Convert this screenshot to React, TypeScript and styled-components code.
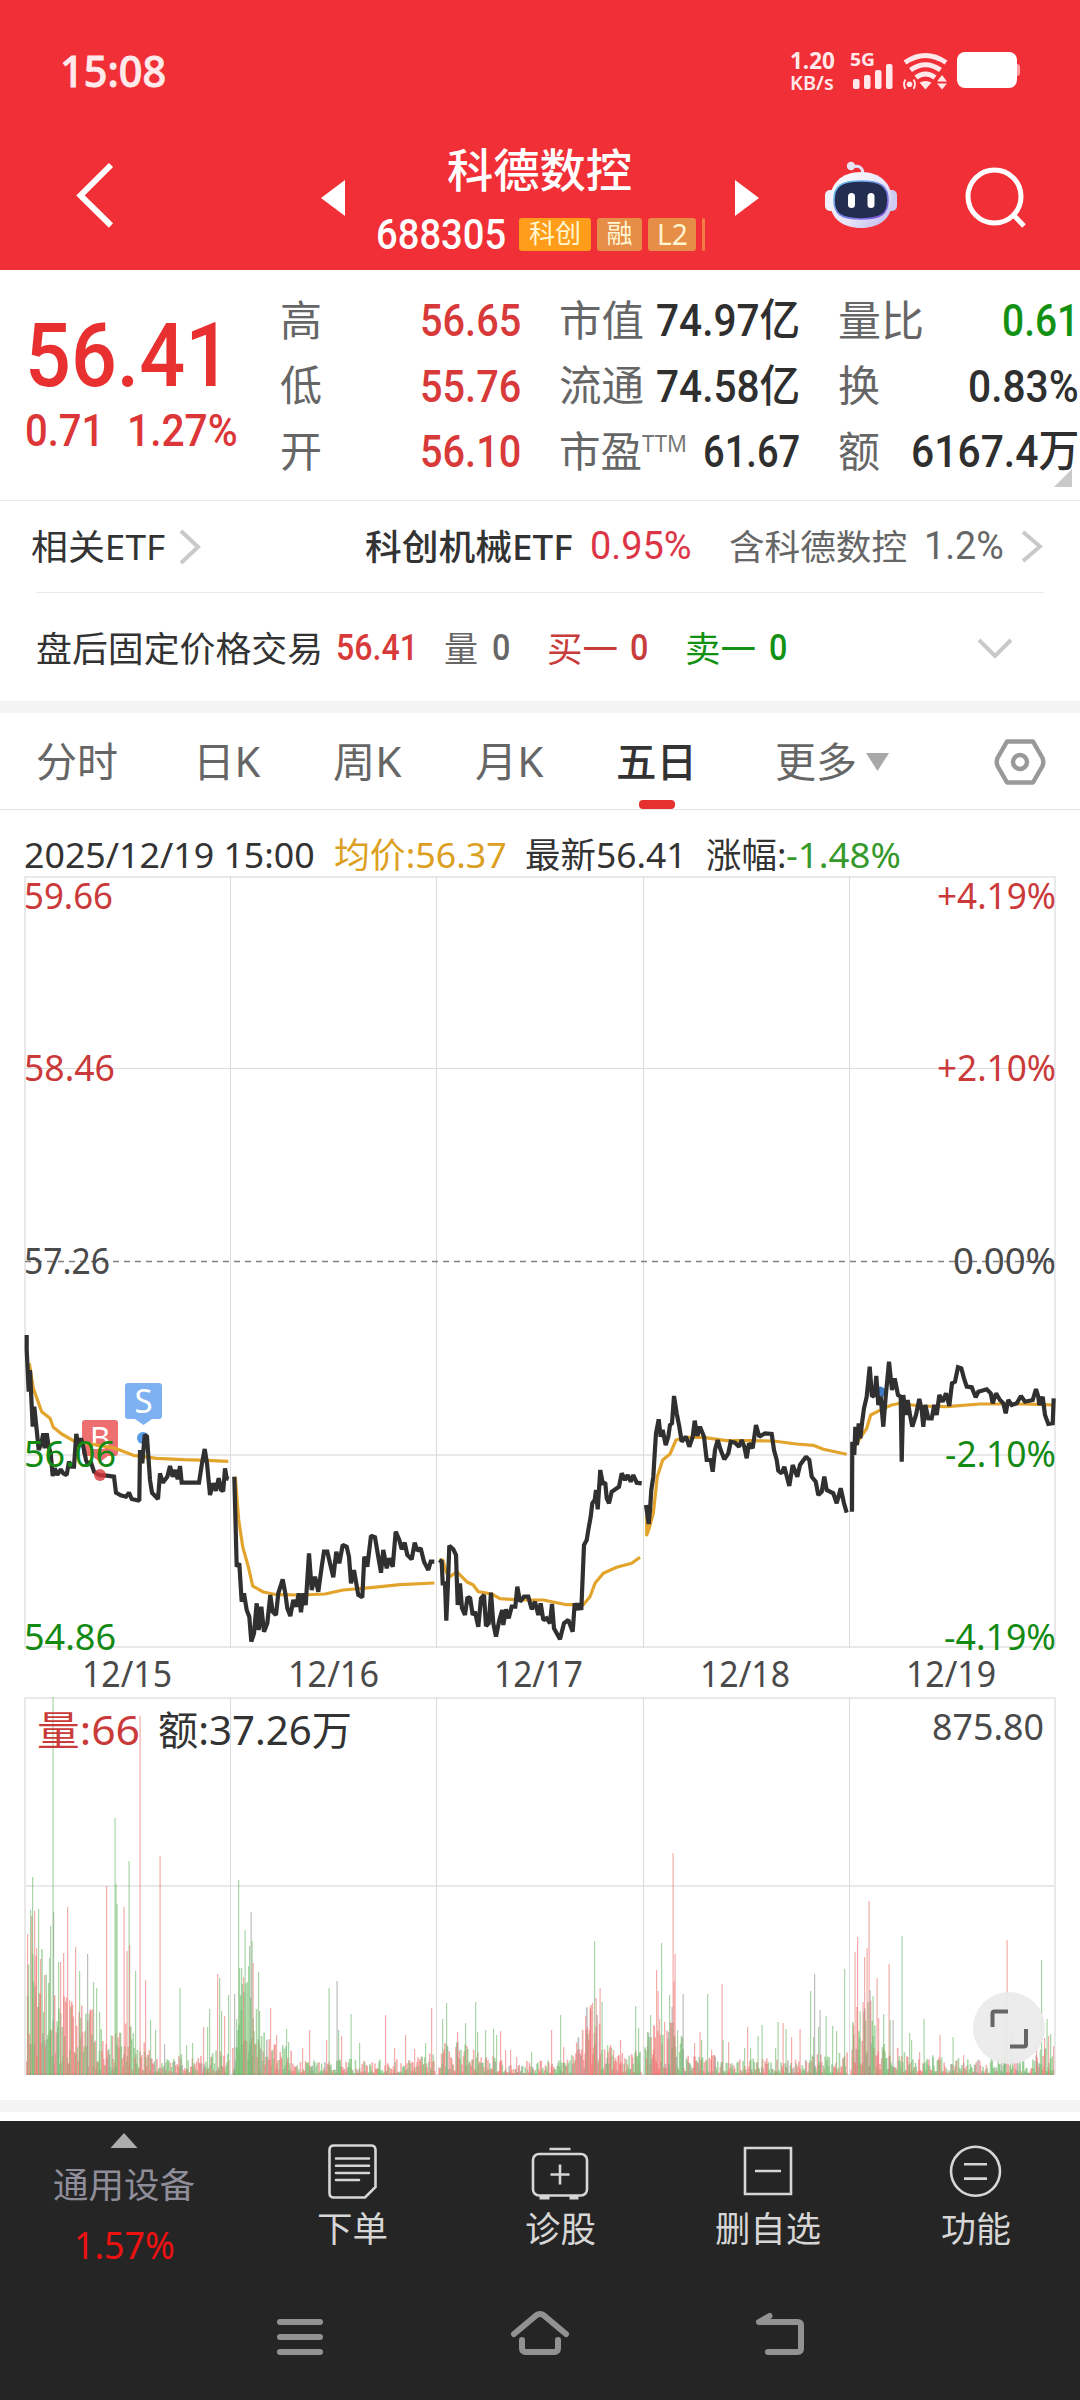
import React, { useLayoutEffect, useRef, useState } from "react";
import styled, { createGlobalStyle } from "styled-components";

const SANS = '"Noto Sans", "Noto Sans CJK SC", sans-serif';
const DIN = 'Roboto, "Noto Sans CJK SC", sans-serif';

const Global = createGlobalStyle`
  * { box-sizing: border-box; }
  body { margin: 0; background: #fff; font-family: ${SANS}; }
`;

/* ---------- text set to a fixed measure ---------- */

interface LabelProps {
  $w: number;
  $size: number;
  $ml?: number;
  $dy?: number;
  $color?: string;
  $weight?: number;
  $din?: boolean;
  $stroke?: number;
  $lh?: number;
}

const LabelBox = styled.span<LabelProps>`
  display: block;
  flex: none;
  width: ${(p) => p.$w}px;
  margin-left: ${(p) => p.$ml ?? 0}px;
  margin-top: ${(p) => p.$dy ?? 0}px;
  font-family: ${(p) => (p.$din ? DIN : SANS)};
  font-size: ${(p) => p.$size}px;
  font-weight: ${(p) => p.$weight ?? 400};
  color: ${(p) => p.$color ?? "inherit"};
  -webkit-text-stroke: ${(p) => p.$stroke ?? 0}px currentColor;
  line-height: ${(p) => p.$lh ?? 1.2};
  white-space: nowrap;
`;

const LabelInk = styled.span`
  display: inline-block;
  transform-origin: 0 50%;
`;

function Label({ children, ...box }: LabelProps & { children: React.ReactNode }) {
  const ref = useRef<HTMLSpanElement>(null);
  const [scale, setScale] = useState(1);
  useLayoutEffect(() => {
    if (ref.current) setScale(box.$w / ref.current.offsetWidth);
  }, [box.$w, children]);
  return (
    <LabelBox {...box}>
      <LabelInk ref={ref} style={{ transform: `scaleX(${scale})` }}>
        {children}
      </LabelInk>
    </LabelBox>
  );
}

const Icon = styled.svg<{ $ml?: number; $mt?: number }>`
  display: block;
  flex: none;
  margin-left: ${(p) => p.$ml ?? 0}px;
  margin-top: ${(p) => p.$mt ?? 0}px;
`;

/* ---------- layout ---------- */

const Screen = styled.main`
  width: 1080px;
  height: 2400px;
  display: flex;
  flex-direction: column;
  background: #fff;
  overflow: hidden;
`;

const Header = styled.header`
  height: 270px;
  flex: none;
  background: #f12f36;
  color: #fff;
`;

const StatusBar = styled.div`
  height: 142px;
  display: flex;
  align-items: center;
  padding-left: 60px;
  color: #ffe9ea;
`;

const NetSpeed = styled.div`
  width: 46px;
  margin: 0 12px 0 624px;
  display: flex;
  flex-direction: column;
  gap: 2px;
`;

const TitleBar = styled.div`
  height: 128px;
  display: flex;
  align-items: flex-start;
  padding-left: 75px;
`;

const TitleBlock = styled.div`
  width: 331px;
  margin-left: 30px;
  display: flex;
  flex-direction: column;
`;

const CodeRow = styled.div`
  display: flex;
  align-items: center;
  height: 34px;
  margin-top: 20px;
`;

const Tag = styled.span<{ $w: number; $ml: number; $bg: string }>`
  width: ${(p) => p.$w}px;
  height: 33px;
  margin-left: ${(p) => p.$ml}px;
  flex: none;
  display: flex;
  align-items: center;
  justify-content: center;
  border-radius: 3px;
  background: ${(p) => p.$bg};
  color: #fff6d0;
`;

const Quote = styled.section`
  height: 231px;
  flex: none;
  display: flex;
  position: relative;
  border-bottom: 1px solid #e9e9e9;
`;

const PriceBlock = styled.div`
  width: 281px;
  padding: 33px 0 0 25px;
`;

const ChangeRow = styled.div`
  display: flex;
  margin-top: -5px;
`;

const Stats = styled.div`
  display: grid;
  grid-template-columns: 241px 241px 241px;
  grid-auto-rows: 65.5px;
  column-gap: 38px;
  margin-left: -1px;
  padding-top: 17px;
`;

const Stat = styled.div`
  display: flex;
  align-items: center;
  justify-content: space-between;
  color: #666;
`;

const StatName = styled.span`
  display: flex;
`;

const Corner = styled.span`
  position: absolute;
  left: 1054px;
  top: 199px;
  border-left: 18px solid transparent;
  border-bottom: 18px solid #c9c9c9;
`;

const EtfRow = styled.section`
  height: 91px;
  flex: none;
  display: flex;
  align-items: center;
  margin-right: 36px;
  padding-left: 31px;
  color: #333;
`;

const Divider = styled.div`
  height: 1px;
  flex: none;
  margin: 0 36px;
  background: #e9e9e9;
`;

const AfterRow = styled.section`
  height: 108px;
  flex: none;
  display: flex;
  align-items: center;
  padding: 4px 0 0 36px;
  color: #333;
`;

const Band = styled.div`
  height: 12px;
  flex: none;
  background: #f4f4f4;
`;

const Tabs = styled.nav`
  height: 97px;
  flex: none;
  display: flex;
  align-items: center;
  padding: 1px 0 0 36px;
  color: #666;
  border-bottom: 1px solid #e4e4e4;
`;

const ActiveTab = styled.div`
  position: relative;
  height: 95px;
  display: flex;
  align-items: center;
  color: #333;
  margin-left: 73px;

  &::after {
    content: "";
    position: absolute;
    left: 23px;
    bottom: 0;
    width: 36px;
    height: 9px;
    border-radius: 4px;
    background: #e63030;
  }
`;

const InfoRow = styled.div`
  height: 66px;
  flex: none;
  display: flex;
  align-items: flex-end;
  padding: 0 0 0 24px;
  color: #333;
`;

const ChartArea = styled.section`
  height: 1224px;
  flex: none;
  position: relative;
`;

const ExpandButton = styled.button`
  position: absolute;
  left: 973px;
  top: 1116px;
  width: 72px;
  height: 72px;
  padding: 0;
  border: 0;
  border-radius: 50%;
  background: rgba(234, 234, 234, 0.92);
`;

const Footer = styled.footer`
  height: 279px;
  margin-top: 9px;
  flex: none;
  background: #252525;
  color: #d6d6d6;
`;

const Actions = styled.div`
  height: 160px;
  display: flex;
`;

const Sector = styled.div`
  width: 248px;
  display: flex;
  flex-direction: column;
  align-items: center;
  padding: 12px 0 0;
`;

const Action = styled.div`
  width: 208px;
  display: flex;
  flex-direction: column;
  align-items: center;
  padding-top: 20px;
`;

const SystemNav = styled.div`
  height: 119px;
  display: flex;
  padding: 29px 0 0 270px;
  gap: 180px;
`;

/* ---------- chart data ---------- */

type Pt = [number, number];
const parse = (s: string, dx: number): Pt[] =>
  s.trim().split(/\s+/).map((p) => {
    const [x, y] = p.split(",").map(Number);
    return [dx + x / 3, 1300 + y / 3];
  });
const line = (pts: Pt[]) => pts.map(([x, y]) => `${x.toFixed(1)},${y.toFixed(1)}`).join(" ");

const PRICE = [
  parse("80,105 80,150 86,275 90,210 98,380 103,320 110,390 116,450 124,430 130,400 134,445 140,400 146,440 152,460 158,528 164,505 172,525 182,508 190,520 200,525 207,485 215,500 222,500 229,402 236,440 243,415 250,440 258,480 264,495 272,485 282,515 297,525 320,527 342,530 348,578 362,586 378,590 387,578 395,597 418,602 420,450 427,490 434,405 441,410 450,540 456,578 474,597 480,520 488,548 502,530 510,498 518,530 526,510 533,538 540,498 545,548 570,548 597,548 606,490 614,447 621,490 630,585 640,550 648,572 656,535 664,572 670,570 675,505 680,535 686,537", 0),
  parse("703,530 710,800 718,790 725,905 732,880 740,930 748,950 754,1025 762,1000 770,910 776,990 784,920 792,995 802,970 811,885 818,935 828,945 835,880 848,838 856,880 862,925 871,948 880,900 889,920 896,880 903,937 910,880 917,915 927,760 935,870 945,830 955,875 965,800 972,755 982,755 990,790 1000,832 1009,755 1018,790 1028,735 1040,740 1047,770 1053,850 1062,810 1075,885 1087,892 1093,770 1102,800 1113,707 1125,712 1133,760 1143,818 1150,750 1160,805 1168,775 1178,800 1187,695 1198,720 1205,748 1214,728 1222,765 1235,778 1244,728 1252,752 1262,745 1272,785 1285,810 1292,785 1303,785", 0),
  parse("58,780 65,785 68,850 75,850 79,962 83,870 88,737 100,748 108,765 113,915 120,850 126,925 135,945 142,895 150,892 158,945 165,935 175,980 183,895 192,885 198,978 206,970 213,878 220,970 228,1010 238,960 247,930 250,975 258,928 266,955 275,920 286,920 292,860 300,905 312,890 325,890 335,928 345,905 355,945 362,910 370,960 380,955 390,970 396,912 402,985 410,1000 420,1018 432,970 445,960 458,995 464,910 472,930 478,910 484,930 492,735 500,720 505,690 512,650 517,610 524,600 528,570 533,628 541,510 548,550 556,548 560,595 567,610 575,575 583,570 597,560 605,520 615,540 623,525 632,545 640,525 650,548 665,550", 420),
  parse("678,615 686,672 690,630 694,570 700,530 704,460 708,400 716,358 722,410 728,390 737,435 745,410 750,375 756,370 762,288 770,340 778,380 785,425 798,410 808,440 818,410 824,362 832,408 840,380 852,410 860,480 872,480 878,515 885,450 893,420 902,450 913,478 925,460 932,425 945,428 957,440 965,420 973,440 980,475 987,430 998,445 1008,375 1018,410 1035,400 1055,402 1062,450 1070,480 1075,512 1085,520 1093,500 1108,558 1118,495 1132,530 1140,495 1158,470 1168,480 1175,530 1187,545 1195,585 1205,575 1213,530 1220,570 1240,580 1250,610 1262,565 1272,610 1280,638", 420),
  parse("96,635 97,425 103,465 106,380 111,435 116,370 121,415 126,370 132,325 140,290 149,200 156,290 164,285 169,228 175,315 182,290 190,380 197,290 207,185 216,270 224,235 234,285 242,290 245,485 250,285 257,345 263,300 270,345 277,380 288,345 298,297 305,330 310,380 316,315 325,355 335,355 343,315 350,345 358,285 368,305 378,280 388,318 396,250 405,245 414,202 424,205 432,235 440,260 455,262 467,292 475,275 500,268 512,280 518,310 528,280 540,300 550,310 557,340 565,300 575,315 590,310 603,288 615,305 638,300 648,267 655,290 658,315 668,290 675,345 685,372 698,370 701,295", 820),
];

const AVERAGE = [
  parse("88,190 100,265 125,335 150,355 160,382 185,402 225,425 290,435 345,445 400,466 470,475 550,479 620,481 685,484", 0),
  parse("706,530 716,660 728,740 745,800 758,858 790,876 830,884 900,885 975,882 1030,870 1120,862 1200,854 1303,849", 0),
  parse("58,780 68,780 80,820 90,830 110,815 140,845 160,855 175,875 215,882 240,896 300,900 370,900 440,914 490,914 510,890 525,850 550,820 590,802 635,790 660,772", 420),
  parse("680,645 680,705 686,690 700,640 712,530 728,480 750,462 768,420 800,412 850,412 920,422 1000,422 1060,423 1130,432 1180,436 1210,448 1280,463", 420),
  parse("95,462 98,450 120,415 140,385 152,345 185,328 215,315 240,310 300,318 380,320 480,312 600,312 660,313 700,315", 820),
];

/* notable volume bars: x, top, colour key */
const SPIKES: [number, number, string][] = (
  "27,1934,r 30,1910,g 32,1877,g 34,1911,r 36,1948,r 38,1909,g 40,1959,r 44,1975,r 49,1958,g 50,1926,g 53,1912,n 52.4,1697,g 58,1962,g 60,1962,r 63,1953,r 67,1907,r 69,2000,r 75,1947,r 79,1971,g 87,1954,n 93,1982,g 96,1988,g 99,2012,g 106,1886,r 112,2036,r 114.5,1818,g 115.5,1884,g 116.5,1904,g 123.5,1907,r 126.5,1951,r 128.5,1861,g 129,1945,r 135,1971,g 139.5,1716,r 145,1980,r 150,2020,g 155,2030,g 159.5,1856,r 164,2044,n 179.5,1988,g 186,2045,g 192,2043,g 203,2027,r 207,2027,g 209,2009,g 217,1974,r 219,1978,g 221,2011,g 224,2016,r 228,1995,g 234,1994,n 236,2019,g 238,1880,g 239,1968,g 241,1968,g 243,1977,r 244.5,1930,g 248,1966,g 249,1946,g 250.5,1912,n 251.5,1941,g 252.5,1963,r 258,1972,g 259,2011,g 270,2008,r 276,2035,r 286,2029,g 288,2042,g 302,2048,r 309,2030,r 326,2040,r 328.5,1988,g 336.5,1981,n 338,2030,g 341,2036,r 350.5,2014,g 359,2043,g 385,2015,r 394,2048,r 405,2035,r 414,2049,r 425,2043,g 431,2008,r 442,2019,g 446,2003,g 457,2032,r 465,2023,g 475,2002,g 477,2032,g 485,2030,g 493,2029,g 496,2035,g 500,2031,r 505,2050,r 510,2050,r 516,2057,r 531,2052,g 551,2030,r 560,2015,g 563,2047,r 585,2016,r 587,2027,r 590,2010,r 592,2003,r 594,1941,g 595.5,1998,r 599.5,1988,r 601.5,2002,g 607,2045,g 610,2045,r 613,2050,r 620,2040,r 635,2006,g 638,2028,g 647,2032,g 650,2015,g 653,2025,r 654,2026,r 656,1970,r 657.5,1991,r 659,2019,r 661,1943,g 664,2022,r 668,2032,n 669,1995,g 671.5,2007,n 672.5,1853,r 673.5,1981,r 674.5,1954,r 677,2030,g 682.5,1994,n 694,2043,r 699.5,2032,r 701,2040,g 707,1994,g 711,2050,r 721.5,1984,r 722.5,2040,g 728,2042,r 744,2048,g 747,2027,r 750,2048,g 757.5,2036,g 761.5,2025,g 775,2048,g 777.5,2022,g 782.5,2023,r 785.5,2029,g 791,2037,r 799.5,2029,r 810,1991,g 813,2037,g 814,1974,n 818,2027,g 819.5,2010,n 825.5,2016,g 832,2026,g 836,2031,g 844,1969,g 853,2025,r 854.5,1952,r 857,1937,r 859.5,2011,g 862.5,2002,r 864,1957,r 866.5,1948,r 868.5,1901,r 869.5,1990,n 872.5,1996,g 876.5,1978,r 878,2018,r 883,2014,g 888.5,1964,r 889.5,2020,g 892.5,2020,n 901.5,1936,g 909,2033,g 911,2040,g 919,2052,r 923.5,2019,g 932,2055,g 939.5,2035,r 952.5,2037,g 963,2055,r 1004,2000,g 1006.5,1940,r 1010,2026,g 1012,2036,g 1036,2047,r 1041,1960,g 1044,2038,r 1046.5,2019,g 1048,2036,r 1050,2034,g 1053,2046,r"
).split(" ").map((s) => {
  const [x, y, c] = s.split(",");
  return [Number(x), Number(y), c];
});

/* typical bar height across the five sessions */
const ENVELOPE: Pt[] = [
  [25, 110], [32, 140], [44, 115], [50, 82], [62, 72], [75, 62], [90, 60], [102, 38], [115, 38], [128, 48],
  [140, 28], [152, 28], [162, 14], [180, 20], [190, 14], [205, 18], [222, 26], [230, 20], [236, 55],
  [244, 95], [252, 85], [258, 40], [270, 32], [285, 26], [300, 14], [320, 12], [345, 14], [370, 14],
  [400, 15], [436, 24], [446, 32], [465, 28], [490, 19], [510, 10], [540, 14], [570, 15], [582, 44],
  [592, 78], [600, 38], [615, 22], [640, 22], [646, 40], [662, 46], [672, 48], [680, 36], [690, 17], [710, 20],
  [725, 12], [745, 15], [790, 14], [812, 18], [845, 20], [856, 60], [870, 72], [880, 30], [892, 30],
  [905, 22], [920, 15], [960, 16], [1000, 15], [1030, 13], [1044, 26], [1055, 30],
];

const SHADE: Record<string, string> = { r: "#ea5552", g: "#4fac49", n: "#777777" };

interface Bar {
  x: number;
  y: number;
  w: number;
  c: string;
}

function volumeBars() {
  const bars: Bar[] = [];
  let seed = 71;
  const rnd = () => {
    seed = (seed * 16807) % 2147483647;
    return seed / 2147483647;
  };
  for (let d = 0; d < 5; d++) {
    for (let i = 0; i < 240; i++) {
      const x = 26 + d * 206.1 + i * 0.845;
      let k = 0;
      while (k < ENVELOPE.length - 2 && ENVELOPE[k + 1][0] < x) k++;
      const [x0, h0] = ENVELOPE[k];
      const [x1, h1] = ENVELOPE[k + 1];
      const env = h0 + ((h1 - h0) * (x - x0)) / (x1 - x0);
      const h = Math.max(2, env * (0.12 + 1.05 * Math.pow(rnd(), 1.5)));
      const t = rnd();
      const rising = (x > 575 && x < 600) || (x > 646 && x < 672);
      const falling = (x > 236 && x < 256) || (x > 674 && x < 684);
      const redShare = rising ? 0.8 : falling ? 0.15 : 0.46;
      bars.push({ x, y: 2075 - h, w: 1.6, c: t < redShare ? "r" : t < 0.92 ? "g" : "n" });
    }
  }
  return bars.concat(SPIKES.map(([x, y, c]) => ({ x, y, w: 1.2, c })));
}

const BARS = volumeBars();

interface AxisText {
  x: number;
  y: number;
  w: number;
  t: string;
  c: string;
  s?: number;
}

const RED = "#cb3a3a";
const GREEN = "#128a14";
const INK = "#4a4a4a";

const AXIS: AxisText[] = [
  { x: 24, y: 909, w: 89, t: "59.66", c: RED },
  { x: 24, y: 1081, w: 91, t: "58.46", c: RED },
  { x: 24, y: 1274, w: 86, t: "57.26", c: INK },
  { x: 24, y: 1467, w: 92, t: "56.06", c: GREEN },
  { x: 24, y: 1650, w: 92, t: "54.86", c: GREEN },
  { x: 937, y: 909, w: 119, t: "+4.19%", c: RED },
  { x: 937, y: 1081, w: 119, t: "+2.10%", c: RED },
  { x: 953, y: 1274, w: 103, t: "0.00%", c: INK },
  { x: 945, y: 1467, w: 111, t: "-2.10%", c: GREEN },
  { x: 944, y: 1650, w: 112, t: "-4.19%", c: GREEN },
  { x: 82, y: 1687, w: 90, t: "12/15", c: INK },
  { x: 288, y: 1687, w: 91, t: "12/16", c: INK },
  { x: 494, y: 1687, w: 89, t: "12/17", c: INK },
  { x: 700, y: 1687, w: 90, t: "12/18", c: INK },
  { x: 906, y: 1687, w: 90, t: "12/19", c: INK },
  { x: 37, y: 1745, w: 103, t: "量:66", c: RED, s: 40 },
  { x: 158, y: 1745, w: 194, t: "额:37.26万", c: "#333", s: 40 },
  { x: 932, y: 1740, w: 112, t: "875.80", c: INK },
];

function Charts() {
  return (
    <Icon width="1080" height="1224" viewBox="0 876 1080 1224">
      <g fill="none" stroke="#e9e9e9" strokeWidth="2">
        <path d="M24 877H1056M24 1455H1056M24 1647H1056M25 876V1648M1055 876V1648" />
        <path d="M24 1698H1056M24 1886H1056M24 2074H1056M25 1697V2075M1055 1697V2075" />
        <path strokeWidth="1" stroke="#dcdcdc" d="M24 1068.500H1056M230.500 876V1648M436.500 876V1648M643.500 876V1648M849.500 876V1648M230.500 1697V2075M436.500 1697V2075M643.500 1697V2075M849.500 1697V2075" />
      </g>
      <path d="M25 1261.500H1055" stroke="#808080" strokeWidth="1.600" strokeDasharray="6 5" />
      <g opacity="0.8">
        {BARS.map((b, i) => (
          <rect key={i} x={b.x} y={b.y} width={b.w} height={2075 - b.y} fill={SHADE[b.c]} fillOpacity={0.6} />
        ))}
      </g>
      <path d="M85 1420h30a3 3 0 0 1 3 3v30a3 3 0 0 1-3 3h-7l-8 6-8-6h-7a3 3 0 0 1-3-3v-30a3 3 0 0 1 3-3z" fill="#ee6f70" />
      <path d="M128 1383h31a3 3 0 0 1 3 3v30a3 3 0 0 1-3 3h-7l-8.500 6-8.500-6h-7a3 3 0 0 1-3-3v-30a3 3 0 0 1 3-3z" fill="#7db1f2" />
      <text x="100" y="1449" fontSize="31" fill="#fff" textAnchor="middle" fontFamily={SANS}>B</text>
      <text x="143.500" y="1413" fontSize="33" fill="#fff" textAnchor="middle" fontFamily={SANS}>S</text>
      <circle cx="143" cy="1438" r="6" fill="#579ae6" />
      <circle cx="880" cy="1392" r="5.500" fill="#3f78c0" />
      <g fill="none" strokeLinejoin="round">
        {AVERAGE.map((p, i) => (
          <polyline key={i} points={line(p)} stroke="#e2a42c" strokeWidth="3.200" />
        ))}
        {PRICE.map((p, i) => (
          <polyline key={i} points={line(p)} stroke="#303030" strokeWidth="4.200" strokeLinejoin="miter" strokeMiterlimit="1.5" />
        ))}
      </g>
      <circle cx="100" cy="1475" r="6" fill="#d9363c" fillOpacity="0.8" />
      {AXIS.map((a) => (
        <text key={a.t + a.x} x={a.x} y={a.y} textLength={a.w} lengthAdjust="spacingAndGlyphs" fontSize={a.s ?? 36} fill={a.c} fontFamily={SANS}>
          {a.t}
        </text>
      ))}
    </Icon>
  );
}

/* ---------- icons ---------- */

const StatusIcons = () => (
  <Icon width="174" height="44" viewBox="848 50 174 44" fill="#ffe9ea">
    <text x="850" y="67" fontSize="17.500" fontWeight="700" fontFamily={SANS} textLength="25" lengthAdjust="spacingAndGlyphs">5G</text>
    <rect x="853" y="80" width="6.500" height="10" rx="2" />
    <rect x="864" y="76" width="6.500" height="14" rx="2" />
    <rect x="875" y="71" width="6.500" height="19" rx="2" />
    <rect x="886" y="65" width="6.500" height="25" rx="2" />
    <g fill="none" stroke="#ffe9ea" strokeWidth="5">
      <path d="M905 63.500Q925.500 49.500 946 63.500" />
      <path d="M910.500 71Q925.500 60.500 940.500 71" />
      <path d="M916 78.500Q925.500 71.500 935 78.500" />
    </g>
    <path d="M919.500 83.500q6-3 12 0l-6 7z" />
    <path d="M937 82.500l5-6.500 5 6.500zM937 84.500l5 6 5-6z" />
    <circle cx="909.500" cy="85.300" r="2.800" />
    <path d="M905.500 80.500q-3 4.800 0 9.500M913.500 80.500q3 4.800 0 9.500" fill="none" stroke="#ffe9ea" strokeWidth="1.800" />
    <rect x="1012" y="65" width="8" height="12" rx="3" fill="#ff9ea3" />
    <rect x="957" y="53" width="60" height="36" rx="8" fill="#fff" />
  </Icon>
);

const Robot = () => (
  <Icon width="76" height="72" viewBox="823 160 76 72" $ml={63} $mt={18}>
    <defs>
      <linearGradient id="shell" x1="0" y1="0" x2="1" y2="1">
        <stop offset="0" stopColor="#ffffff" />
        <stop offset="0.600" stopColor="#e6e4f8" />
        <stop offset="1" stopColor="#b9b3ea" />
      </linearGradient>
      <linearGradient id="rim" x1="0" y1="0" x2="1" y2="1">
        <stop offset="0" stopColor="#66c8ee" />
        <stop offset="1" stopColor="#8a4fe0" />
      </linearGradient>
    </defs>
    <path d="M852 167q10-3 11 6" fill="none" stroke="#e4e2f5" strokeWidth="3" />
    <circle cx="851" cy="166" r="4.200" fill="#e7e3f4" />
    <rect x="825" y="190" width="12" height="21" rx="5" fill="#eef0fb" />
    <rect x="885" y="190" width="12" height="21" rx="5" fill="#cfcaf0" />
    <path d="M861 172C881 172 892 184 892 201C892 219 879 228 861 228C843 228 830 219 830 201C830 184 841 172 861 172Z" fill="url(#shell)" />
    <path d="M861 181C881 181 888 186 888 200C888 214 881 219 861 219C841 219 834 214 834 200C834 186 841 181 861 181Z" fill="#232d50" stroke="url(#rim)" strokeWidth="1.600" />
    <rect x="848" y="193" width="7" height="15" rx="3.500" fill="#fff" />
    <rect x="867.500" y="193" width="7" height="15" rx="3.500" fill="#fff" />
  </Icon>
);

const Chevron = ({ h, ml }: { h: number; ml: number }) => (
  <Icon width="22" height={h + 4} viewBox={`0 0 22 ${h + 4}`} $ml={ml}>
    <path d={`M2 3L19 ${h / 2 + 2}L2 ${h + 1}`} fill="none" stroke="#c9c9c9" strokeWidth="4" />
  </Icon>
);

interface StatData {
  name: string;
  nameW: number;
  ttm?: boolean;
  value: string;
  valueW: number;
  color: string;
}

const DARK = "#2f2f2f";
const UP = "#d83a3a";
const STATS: StatData[] = [
  { name: "高", nameW: 42, value: "56.65", valueW: 101, color: UP },
  { name: "市值", nameW: 85, value: "74.97亿", valueW: 144, color: DARK },
  { name: "量比", nameW: 86, value: "0.61", valueW: 77, color: "#139113" },
  { name: "低", nameW: 42, value: "55.76", valueW: 101, color: UP },
  { name: "流通", nameW: 85, value: "74.58亿", valueW: 144, color: DARK },
  { name: "换", nameW: 42, value: "0.83%", valueW: 111, color: DARK },
  { name: "开", nameW: 42, value: "56.10", valueW: 101, color: UP },
  { name: "市盈", nameW: 83, ttm: true, value: "61.67", valueW: 97, color: DARK },
  { name: "额", nameW: 42, value: "6167.4万", valueW: 168, color: DARK },
];

export default function App() {
  return (
    <Screen>
      <Global />
      <Header>
        <StatusBar>
          <Label $w={106} $size={43} $weight={500} $stroke={0.9}>15:08</Label>
          <NetSpeed>
            <Label $w={45} $size={23} $weight={700} $lh={1}>1.20</Label>
            <Label $w={44} $size={19} $weight={600} $lh={1}>KB/s</Label>
          </NetSpeed>
          <StatusIcons />
        </StatusBar>
        <TitleBar>
          <Icon width="42" height="70" viewBox="75 160 42 70" $mt={18}>
            <path d="M111 165L80.500 195.500L111 225.500" fill="none" stroke="#fff" strokeWidth="6" />
          </Icon>
          <Icon width="25" height="38" viewBox="0 0 25 38" $ml={204} $mt={37}>
            <path d="M0 19L24 1V37Z" fill="#fff" />
          </Icon>
          <TitleBlock>
            <Label $w={185} $size={46} $ml={71} $weight={500}>科德数控</Label>
            <CodeRow>
              <Label $w={130} $size={42} $weight={500} $dy={1} $din>688305</Label>
              <Tag $w={72} $ml={13} $bg="#ff9d1b"><Label $w={52} $size={26} $dy={-2}>科创</Label></Tag>
              <Tag $w={45} $ml={6} $bg="#e68d48"><Label $w={26} $size={26} $dy={-2}>融</Label></Tag>
              <Tag $w={48} $ml={6} $bg="#e68d48"><Label $w={31} $size={29} $lh={1.1}>L2</Label></Tag>
              <Tag $w={3} $ml={6} $bg="#f27c45" />
            </CodeRow>
          </TitleBlock>
          <Icon width="25" height="38" viewBox="0 0 25 38" $ml={28} $mt={37}>
            <path d="M0 1V37L24 19Z" fill="#fff" />
          </Icon>
          <Robot />
          <Icon width="64" height="66" viewBox="964 165 64 66" $ml={65} $mt={23}>
            <g fill="none" stroke="#fff" strokeWidth="5">
              <circle cx="994.500" cy="196.500" r="26.500" />
              <path d="M1013 214.500L1024 226" />
            </g>
          </Icon>
        </TitleBar>
      </Header>

      <Quote>
        <PriceBlock>
          <Label $w={206} $size={89} $weight={500} $color="#e93031" $din>56.41</Label>
          <ChangeRow>
            <Label $w={79} $size={44} $color="#dc3638" $weight={500} $din>0.71</Label>
            <Label $w={111} $size={44} $ml={23} $color="#dc3638" $weight={500} $din>1.27%</Label>
          </ChangeRow>
        </PriceBlock>
        <Stats>
          {STATS.map((s) => (
            <Stat key={s.name}>
              <StatName>
                <Label $w={s.nameW} $size={42}>{s.name}</Label>
                {s.ttm && <Label $w={45} $size={24} $dy={3} $color="#777">TTM</Label>}
              </StatName>
              <Label $w={s.valueW} $size={44} $dy={4} $weight={500} $color={s.color} $din>{s.value}</Label>
            </Stat>
          ))}
        </Stats>
        <Corner />
      </Quote>

      <EtfRow>
        <Label $w={134} $size={35}>相关ETF</Label>
        <Chevron h={34} ml={14} />
        <Label $w={208} $size={35} $ml={164} $weight={500}>科创机械ETF</Label>
        <Label $w={102} $size={39} $ml={17} $color="#dc3545" $din>0.95%</Label>
        <Label $w={178} $size={35} $ml={37} $color="#666">含科德数控</Label>
        <Label $w={80} $size={39} $ml={17} $color="#666" $din>1.2%</Label>
        <Chevron h={31} ml={17} />
      </EtfRow>
      <Divider />
      <AfterRow>
        <Label $w={287} $size={35}>盘后固定价格交易</Label>
        <Label $w={82} $size={36} $ml={13} $weight={500} $color={UP} $din>56.41</Label>
        <Label $w={34} $size={35} $ml={26} $color="#666">量</Label>
        <Label $w={18} $size={36} $ml={14} $weight={500} $color="#666" $din>0</Label>
        <Label $w={71} $size={35} $ml={37} $color="#c83c3c">买一</Label>
        <Label $w={18} $size={36} $ml={12} $weight={500} $color="#c83c3c" $din>0</Label>
        <Label $w={71} $size={35} $ml={37} $color="#139113">卖一</Label>
        <Label $w={18} $size={36} $ml={13} $weight={500} $color="#139113" $din>0</Label>
        <Icon width="38" height="24" viewBox="0 0 38 24" $ml={189}>
          <path d="M3 3L19 19L35 3" fill="none" stroke="#c9c9c9" strokeWidth="4" />
        </Icon>
      </AfterRow>
      <Band />

      <Tabs>
        <Label $w={82} $size={41}>分时</Label>
        <Label $w={67} $size={41} $ml={75}>日K</Label>
        <Label $w={68} $size={41} $ml={73}>周K</Label>
        <Label $w={68} $size={41} $ml={74}>月K</Label>
        <ActiveTab><Label $w={81} $size={41} $weight={500}>五日</Label></ActiveTab>
        <Label $w={82} $size={41} $ml={78}>更多</Label>
        <Icon width="24" height="20" viewBox="0 0 24 20" $ml={9}>
          <path d="M0 1H23L11.500 19Z" fill="#a8a8a8" />
        </Icon>
        <Icon width="54" height="50" viewBox="-27 -25 54 50" $ml={103}>
          <path d="M-13 -20.500H13L22.500 -4Q24 0 22.500 4L13 20.500H-13L-22.500 4Q-24 0 -22.500 -4Z" fill="none" stroke="#999" strokeWidth="4.500" strokeLinejoin="round" />
          <circle r="7" fill="none" stroke="#999" strokeWidth="4.500" />
        </Icon>
      </Tabs>

      <InfoRow>
        <Label $w={291} $size={35}>2025/12/19 15:00</Label>
        <Label $w={173} $size={35} $ml={19} $color="#dc9f22">均价:56.37</Label>
        <Label $w={161} $size={35} $ml={18}>最新56.41</Label>
        <Label $w={80} $size={35} $ml={20}>涨幅:</Label>
        <Label $w={115} $size={35} $color="#36992b">-1.48%</Label>
      </InfoRow>

      <ChartArea>
        <Charts />
        <ExpandButton aria-label="expand">
          <Icon width="72" height="72" viewBox="0 0 72 72">
            <path d="M19.500 35V21.500q0-2 2-2H35M37 54.500H51q2 0 2-2V37" fill="none" stroke="#666" strokeWidth="4" />
          </Icon>
        </ExpandButton>
      </ChartArea>
      <Band />

      <Footer>
        <Actions>
          <Sector>
            <Icon width="28" height="15" viewBox="0 0 28 15"><path d="M14 0L27.500 15H0.500Z" fill="#adadad" /></Icon>
            <Label $w={142} $size={35} $color="#8f8d99" $dy={16}>通用设备</Label>
            <Label $w={101} $size={39} $color="#ee1111" $dy={15}>1.57%</Label>
          </Sector>
          <Action>
            <Icon width="60" height="60" viewBox="322 2141 60 60">
              <g fill="none" stroke="#d6d6d6" strokeWidth="2.600">
                <path d="M334 2145.500H371Q375.500 2145.500 375.500 2150V2187L365 2197.500H334Q329.500 2197.500 329.500 2193V2150Q329.500 2145.500 334 2145.500Z" />
                <path d="M336 2158.500H369M336 2165.800H369M336 2173H369M336 2180H359" strokeLinecap="round" />
              </g>
            </Icon>
            <Label $w={71} $size={35} $dy={7}>下单</Label>
          </Action>
          <Action>
            <Icon width="60" height="60" viewBox="529.500 2141 60 60">
              <g fill="none" stroke="#d6d6d6" strokeWidth="2.600">
                <rect x="532.500" y="2154" width="54" height="41.500" rx="6" />
                <path d="M549 2149H570M550 2174.500H569M559.500 2164.500V2184.500" />
                <path d="M539 2197.500H549M569 2197.500H578" strokeWidth="4" />
              </g>
            </Icon>
            <Label $w={71} $size={35} $dy={7}>诊股</Label>
          </Action>
          <Action>
            <Icon width="60" height="60" viewBox="737 2141 60 60">
              <path d="M744 2148H790V2194H744ZM754 2171H780" fill="none" stroke="#d6d6d6" strokeWidth="2.600" />
            </Icon>
            <Label $w={106} $size={35} $dy={7}>删自选</Label>
          </Action>
          <Action>
            <Icon width="60" height="60" viewBox="946 2141 60 60">
              <g fill="none" stroke="#d6d6d6" strokeWidth="2.600">
                <circle cx="975.500" cy="2171.300" r="24.500" />
                <path d="M964 2164.300H987M964 2178.600H987" />
              </g>
            </Icon>
            <Label $w={70} $size={35} $dy={7}>功能</Label>
          </Action>
        </Actions>
        <SystemNav>
          <Icon width="60" height="50" viewBox="270 2310 60 50">
            <path d="M280 2322H320M280 2337H320M280 2352H320" stroke="#929292" strokeWidth="6" strokeLinecap="round" />
          </Icon>
          <Icon width="60" height="50" viewBox="510 2310 60 50">
            <path d="M514 2334L536 2315.500Q540 2312.500 544 2315.500L566 2334M522 2340V2348Q522 2352 526 2352H554Q558 2352 558 2348V2340" fill="none" stroke="#929292" strokeWidth="6" strokeLinecap="round" strokeLinejoin="round" />
          </Icon>
          <Icon width="60" height="50" viewBox="750 2310 60 50">
            <path d="M769.500 2316L759 2322H797.500Q801 2322 801 2325.500V2348.500Q801 2352 797.500 2352H768" fill="none" stroke="#929292" strokeWidth="6" strokeLinecap="round" strokeLinejoin="round" />
          </Icon>
        </SystemNav>
      </Footer>
    </Screen>
  );
}
